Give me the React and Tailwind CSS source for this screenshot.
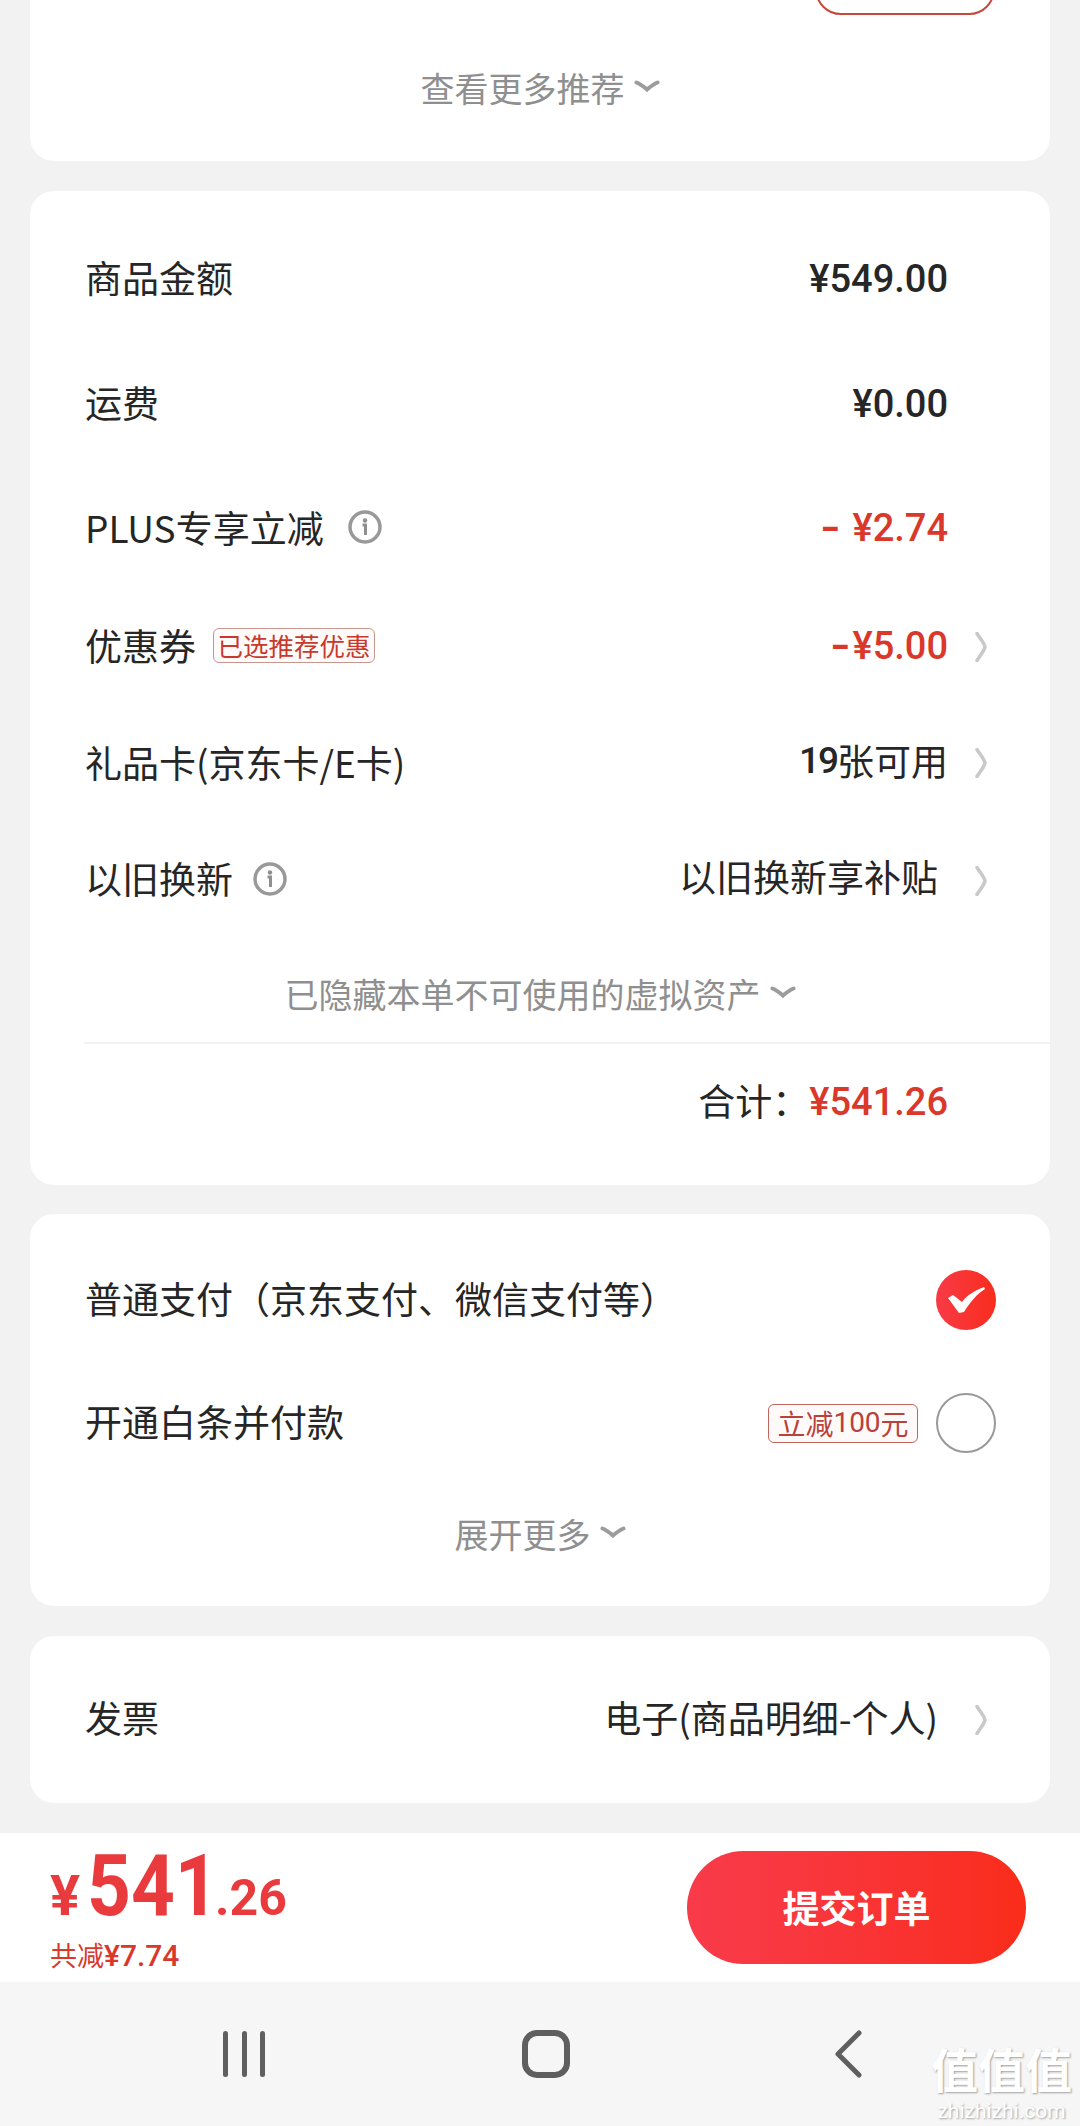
import React from 'react';

const cjk = '"Noto Sans CJK SC", sans-serif';

const ChevronDown = () => (
    <svg className="w-[26px] h-[14px] ml-[9px] -mt-[4px]" viewBox="0 0 26 14" fill="none">
        <path d="M2.500 3.500c4 1.500 7 4 10.500 7c3.500-3 6.500-5.500 10.500-7" stroke="#9c9c9c" strokeWidth="4" strokeLinecap="round" />
    </svg>
);

const ChevronRight = ({ className = 'ml-[27px]' }) => (
    <svg className={`w-[12px] h-[30px] ${className}`} viewBox="0 0 12 30" fill="none">
        <path d="M2 1.500c3 5 7 9 8 13.500c-1 4.500-5 8.500-8 13.500" stroke="#c9c9c9" strokeWidth="3.500" strokeLinecap="round" />
    </svg>
);

const Info = ({ className = '' }) => (
    <svg className={`w-[34px] h-[34px] ${className}`} viewBox="0 0 34 34" fill="none">
        <circle cx="17" cy="17" r="15" stroke="#999999" strokeWidth="3.500" />
        <circle cx="17" cy="10.500" r="2.200" fill="#8f8f8f" />
        <path d="M14.500 15H17.500V25" stroke="#8f8f8f" strokeWidth="3" />
    </svg>
);

const Amount = ({ children, className = 'text-[#262626]' }) => (
    <span className={`text-[38px] font-medium font-[Roboto] ${className}`}>{children}</span>
);

// wider dash than the font gives
const Minus = ({ className = 'mr-[1px]' }) => (
    <span className={`inline-block origin-right scale-x-[1.4] font-bold ${className}`}>-</span>
);

// the CJK glyphs sit a little low in their line box
const Label = ({ children, className = 'pb-[4px]' }) => (
    <span className={`flex items-center ${className}`}>{children}</span>
);

const Row = ({ height, children }) => (
    <div className={`flex items-center justify-between pl-[55px] ${height}`}>{children}</div>
);

const Expand = ({ children, className }) => (
    <div className={`flex items-center justify-center text-[34px] leading-none text-[#8f8f8f] ${className}`}>
        {children}
        <ChevronDown />
    </div>
);

export default function App() {
    return (
        <div className="flex flex-col h-[2126px] overflow-hidden bg-[#f2f2f2] text-[37px] text-[#262626]" style={{ fontFamily: cjk }}>
            {/* recommend card, cut by the top of the screen */}
            <section className="mx-[30px] h-[161px] shrink-0 overflow-hidden rounded-b-[24px] bg-white">
                <div className="flex justify-end pr-[55px]">
                    <div className="-mt-[40px] h-[55px] w-[180px] rounded-[26px] border-2 border-[#c8483a]" />
                </div>
                <Expand className="mt-[43px] h-[60px]">查看更多推荐</Expand>
            </section>

            {/* price detail */}
            <section className="mx-[30px] mt-[30px] h-[994px] shrink-0 rounded-[24px] bg-white pt-[25px] leading-none">
                <Row height="h-[126px] pr-[102px]">
                    <Label>商品金额</Label>
                    <Amount>¥549.00</Amount>
                </Row>
                <Row height="h-[124px] pr-[102px]">
                    <Label>运费</Label>
                    <Amount>¥0.00</Amount>
                </Row>
                <Row height="h-[124px] pr-[102px]">
                    <Label className="pb-[2px]">
                        PLUS专享立减
                        <Info className="ml-[24px]" />
                    </Label>
                    <Amount className="text-[#d9382a]"><Minus className="mr-[11px]" />¥2.74</Amount>
                </Row>
                <Row height="h-[114px] pr-[63px]">
                    <Label>
                        优惠券
                        <span className="ml-[17px] flex h-[35px] w-[162px] items-center justify-center rounded-[6px] border border-[#c9968e] bg-[#fffafa] text-[25.500px] text-[#c8392b]">
                            已选推荐优惠
                        </span>
                    </Label>
                    <span className="flex items-center">
                        <span className="pb-[5px]">
                            <Amount className="text-[#d9382a]"><Minus />¥5.00</Amount>
                        </span>
                        <ChevronRight />
                    </span>
                </Row>
                <Row height="h-[118px] pr-[63px]">
                    <Label className="pb-[2px]">礼品卡(京东卡/E卡)</Label>
                    <span className="flex items-center">
                        <Label className="pb-[6px]"><span className="font-[Roboto] font-medium tracking-[-2px]">19</span>张可用</Label>
                        <ChevronRight />
                    </span>
                </Row>
                <Row height="h-[112px] pr-[63px]">
                    <Label className="pt-[1px]">
                        以旧换新
                        <Info className="ml-[20px]" />
                    </Label>
                    <span className="flex items-center">
                        <Label>以旧换新享补贴</Label>
                        <ChevronRight className="ml-[37px] mt-[6px]" />
                    </span>
                </Row>
                <Expand className="mt-[11px] h-[97px]">已隐藏本单不可使用的虚拟资产</Expand>
                <div className="ml-[54px] h-[2px] bg-[#f2f2f2]" />
                <div className="flex h-[116px] items-center justify-end pr-[102px]">
                    <Label>合计：</Label>
                    <Amount className="text-[#d9382a]">¥541.26</Amount>
                </div>
            </section>

            {/* payment */}
            <section className="mx-[30px] mt-[29px] h-[392px] shrink-0 rounded-[24px] bg-white pt-[24px] leading-none">
                <Row height="h-[124px] pr-[54px]">
                    <Label>普通支付（京东支付、微信支付等）</Label>
                    <svg className="w-[60px] h-[60px]" viewBox="0 0 60 60">
                        <defs>
                            <linearGradient id="check-red" x1="0" x2="1" y1="0" y2="0">
                                <stop offset="0" stopColor="#f83a46" />
                                <stop offset="1" stopColor="#f92d1d" />
                            </linearGradient>
                        </defs>
                        <circle cx="30" cy="30" r="30" fill="url(#check-red)" />
                        <path d="M12 28l5-3 9 7c5-7 12-11 22-15l1 2c-8 5-15 13-21 23l-5 1z" fill="#fff" />
                    </svg>
                </Row>
                <Row height="h-[122px] pr-[54px]">
                    <Label>开通白条并付款</Label>
                    <span className="flex items-center">
                        <span className="flex h-[39px] w-[150px] items-center justify-center rounded-[6px] border border-[#c0665c] bg-[#fffafa] text-[28px] text-[#b8423a]">
                            立减<span className="font-[Roboto]">100</span>元
                        </span>
                        <span className="ml-[18px] h-[60px] w-[60px] rounded-full border-2 border-[#999999]" />
                    </span>
                </Row>
                <Expand className="h-[100px]">展开更多</Expand>
            </section>

            {/* invoice */}
            <section className="mx-[30px] mt-[30px] flex h-[167px] shrink-0 items-center justify-between rounded-[24px] bg-white pl-[55px] pr-[63px] leading-none">
                <Label>发票</Label>
                <span className="flex items-center">
                    <Label>电子(商品明细-个人)</Label>
                    <ChevronRight className="ml-[37px]" />
                </span>
            </section>

            {/* submit bar */}
            <footer className="mt-[30px] flex h-[149px] shrink-0 items-center justify-between bg-white pl-[50px] pr-[54px]">
                <div className="flex flex-col text-[#e93b3d] leading-none">
                    <div className="flex h-[84px] items-baseline font-bold font-[Roboto]">
                        <span className="inline-block w-[37px] text-[56px]">¥</span>
                        <span className="inline-block w-[128px] origin-left scale-x-[0.9] text-[85px]">541</span>
                        <span className="text-[50px]">.26</span>
                    </div>
                    <div className="mt-[13px] text-[27px] text-[#d9382a]">
                        共减<span className="font-[Roboto] text-[30px] font-medium">¥7.74</span>
                    </div>
                </div>
                <button className="flex h-[113px] w-[339px] items-center justify-center rounded-full bg-gradient-to-r from-[#f83b4a] to-[#fa2c19] text-[37px] font-bold text-white">
                    提交订单
                </button>
            </footer>

            {/* android nav bar */}
            <nav className="relative flex flex-1 items-center bg-[#f6f6f6] pl-[93px]">
                <div className="flex w-[302px] justify-center">
                    <div className="flex h-[46px] w-[42px] justify-between">
                        <span className="w-[5px] rounded-full bg-[#5f5f5f]" />
                        <span className="w-[5px] rounded-full bg-[#5f5f5f]" />
                        <span className="w-[5px] rounded-full bg-[#5f5f5f]" />
                    </div>
                </div>
                <div className="flex w-[302px] justify-center">
                    <div className="h-[48px] w-[48px] rounded-[15px] border-[6px] border-[#5f5f5f]" />
                </div>
                <div className="flex w-[302px] justify-center">
                    <svg className="w-[28px] h-[48px]" viewBox="0 0 28 48" fill="none">
                        <path d="M25 3L4 24l21 21" stroke="#5f5f5f" strokeWidth="5" strokeLinecap="round" strokeLinejoin="round" />
                    </svg>
                </div>
                {/* watermark */}
                <div className="absolute right-[8px] top-[62px] flex flex-col items-center font-bold text-white leading-none [text-shadow:1px_1px_2px_#a0a0a0]">
                    <span className="text-[47px]">值值值</span>
                    <span className="mt-[10px] font-[Roboto] text-[21px] font-normal">zhizhizhi.com</span>
                </div>
            </nav>
        </div>
    );
}
